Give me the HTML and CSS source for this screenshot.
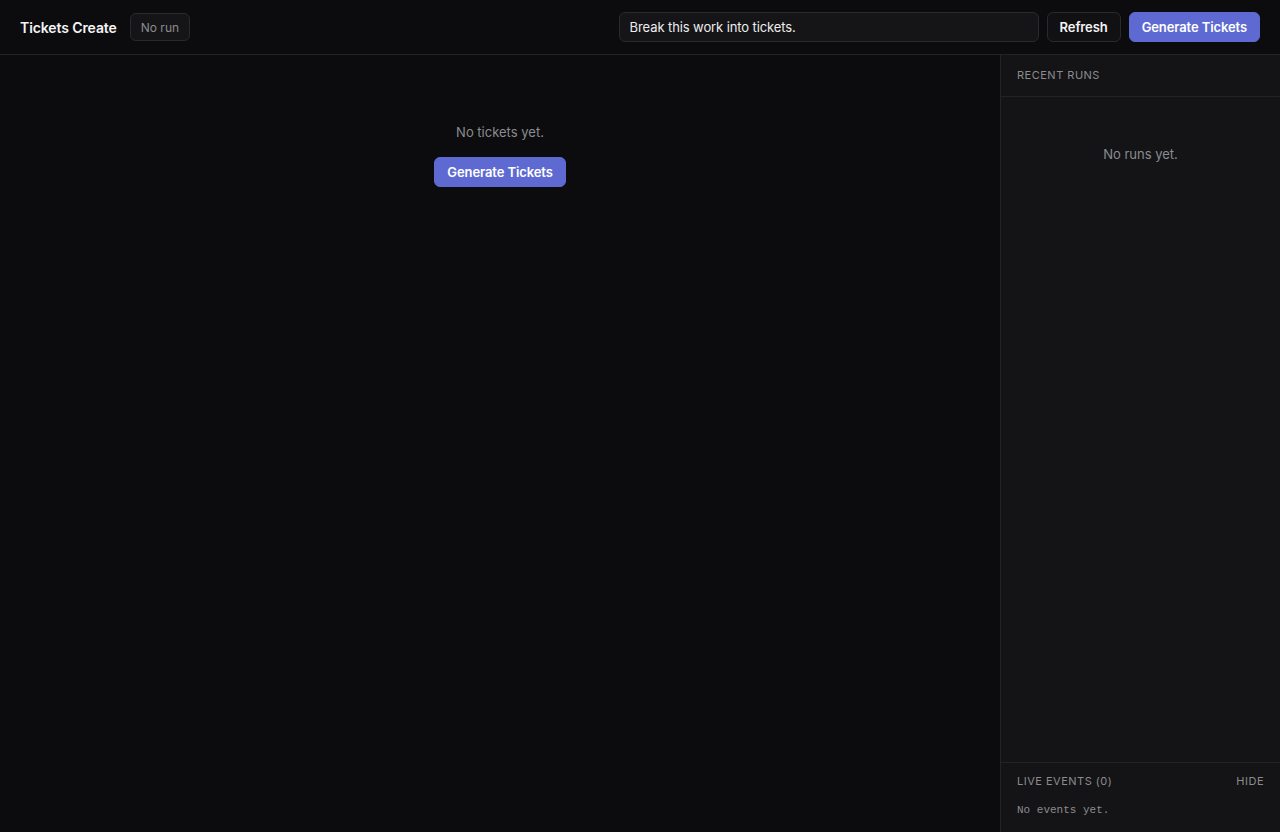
FILE: index.html
```html
<!DOCTYPE html>
<html lang="en">
<head>
<meta charset="utf-8">
<title>Tickets Create</title>
<link rel="stylesheet" href="styles.css">
</head>
<body>
<div class="app">
  <header class="topbar">
    <div class="topbar-left">
      <h1 class="title">Tickets Create</h1>
      <span class="badge">No run</span>
    </div>
    <div class="topbar-right">
      <input class="prompt" type="text" value="Break this work into tickets.">
      <button class="btn btn-ghost">Refresh</button>
      <button class="btn btn-primary">Generate Tickets</button>
    </div>
  </header>
  <div class="body">
    <main class="main">
      <p class="empty">No tickets yet.</p>
      <button class="btn btn-primary">Generate Tickets</button>
    </main>
    <aside class="sidebar">
      <div class="side-head">Recent runs</div>
      <div class="runs">
        <p class="empty">No runs yet.</p>
      </div>
      <section class="events">
        <div class="events-head">
          <span>Live events (0)</span>
          <span class="hide">Hide</span>
        </div>
        <div class="events-log">No events yet.</div>
      </section>
    </aside>
  </div>
</div>
</body>
</html>
```
FILE: styles.css
```css
* { box-sizing: border-box; }

html, body {
  margin: 0;
  height: 100%;
}

body {
  background: #0c0c0e;
  color: #ededef;
  font-family: Inter, "Liberation Sans", Arial, sans-serif;
  font-size: 13px;
}

.app {
  display: flex;
  flex-direction: column;
  height: 100vh;
}

/* Top bar */
.topbar {
  height: 55px;
  flex: none;
  display: flex;
  align-items: center;
  justify-content: space-between;
  padding: 0 20px;
  border-bottom: 1px solid #232327;
}

.topbar-left {
  display: flex;
  align-items: center;
  gap: 13px;
}

.title {
  margin: 0;
  font-size: 14px;
  font-weight: 600;
  color: #f4f4f5;
  letter-spacing: -0.1px;
  padding-top: 1px;
}

.badge {
  display: inline-flex;
  align-items: center;
  height: 28px;
  padding: 0 10px;
  border: 1px solid #2a2a2e;
  border-radius: 6px;
  background: #151517;
  color: #8b8b90;
  font-size: 12px;
}

.topbar-right {
  display: flex;
  align-items: center;
  gap: 8px;
}

.prompt {
  width: 420px;
  height: 30px;
  padding: 0 10px;
  border: 1px solid #2a2a2e;
  border-radius: 6px;
  background: #151517;
  color: #ededef;
  font-family: inherit;
  font-size: 13px;
  letter-spacing: -0.1px;
  outline: none;
}

.btn {
  height: 30px;
  padding: 0 12px;
  border-radius: 6px;
  font-family: inherit;
  font-size: 13px;
  font-weight: 600;
  letter-spacing: -0.1px;
  cursor: pointer;
}

.btn-ghost {
  background: #111113;
  border: 1px solid #2a2a2e;
  color: #f4f4f5;
}

.btn-primary {
  background: #5e6ad2;
  border: 1px solid #5e6ad2;
  color: #ffffff;
}

/* Body */
.body {
  flex: 1;
  display: flex;
  min-height: 0;
}

.main {
  flex: 1;
  display: flex;
  flex-direction: column;
  align-items: center;
  padding-top: 67px;
  gap: 15px;
}

.empty {
  margin: 0;
  color: #8b8b90;
  font-size: 13px;
  line-height: 20px;
}

/* Sidebar */
.sidebar {
  width: 280px;
  flex: none;
  display: flex;
  flex-direction: column;
  background: #141416;
  border-left: 1px solid #232327;
}

.side-head {
  padding: 14px 16px;
  line-height: 13px;
  font-size: 11px;
  letter-spacing: 0.5px;
  text-transform: uppercase;
  color: #8b8b90;
  border-bottom: 1px solid #232327;
}

.runs {
  flex: 1;
  padding: 47px 16px 0;
  text-align: center;
}

.events {
  border-top: 1px solid #232327;
  padding: 12px 16px 15px;
}

.events-head {
  display: flex;
  justify-content: space-between;
  font-size: 11px;
  line-height: 13px;
  letter-spacing: 0.5px;
  text-transform: uppercase;
  color: #8b8b90;
}

.events-log {
  margin-top: 15px;
  font-family: "Liberation Mono", "DejaVu Sans Mono", monospace;
  font-size: 11px;
  line-height: 14px;
  color: #8b8b90;
}
```
